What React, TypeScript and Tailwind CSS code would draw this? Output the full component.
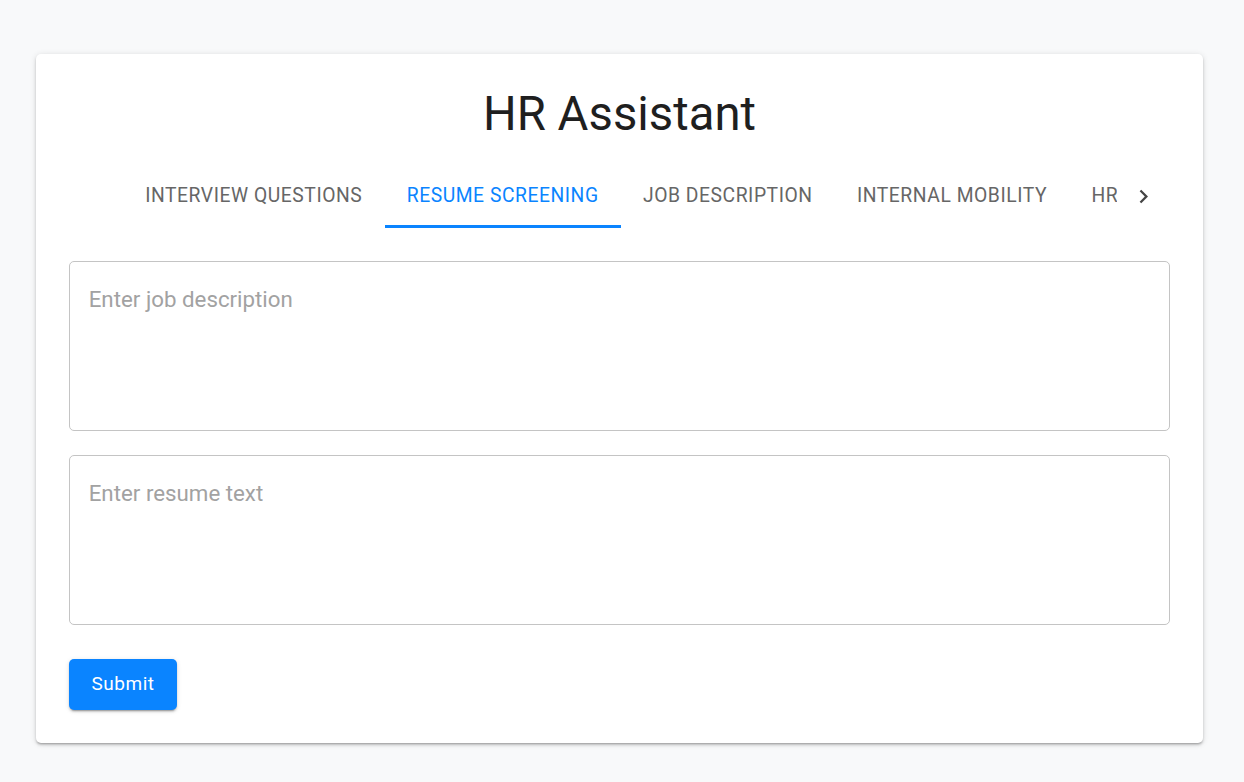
import React from "react";

const tabs = ["Interview Questions", "Resume Screening", "Job Description", "Internal Mobility", "HR Policies"];

export default function App() {
  return (
    <div className="min-h-[782px] w-full bg-[#f8f9fa] pt-[54px]" style={{ fontFamily: "Roboto, 'Noto Sans', sans-serif" }}>
      <div className="ml-[36px] w-[1167px] rounded-[5px] bg-white px-[33px] pt-[32px] pb-[33px] shadow-[0_2px_2px_-1px_rgba(0,0,0,0.2),0_2px_3px_0_rgba(0,0,0,0.14),0_1px_6px_0_rgba(0,0,0,0.12)]">
        <h1 className="text-center text-[47.3px] leading-[56px] font-normal text-[#1f1f1f]">HR Assistant</h1>
        <div className="mt-[22px] flex h-[64px]">
          <div className="w-[54px] shrink-0" />
          <div className="relative flex flex-1 overflow-hidden">
            <div className="flex shrink-0">
              {tabs.map((t, i) => (
                <div
                  key={t}
                  className={`relative flex h-[64px] shrink-0 items-center px-[22.2px] text-[19.3px] font-normal uppercase tracking-[0.02857em] ${i === 1 ? "text-[#0a84ff]" : "text-[#666666]"}`}
                >
                  {t}
                  {i === 1 && <div className="absolute bottom-0 left-0 right-0 h-[3px] bg-[#0a84ff]" />}
                </div>
              ))}
            </div>
          </div>
          <div className="flex w-[53px] shrink-0 items-center justify-center">
            <svg viewBox="0 0 24 24" width="27" height="27" fill="#444">
              <path d="M8.59 16.59 13.17 12 8.59 7.41 10 6l6 6-6 6z" />
            </svg>
          </div>
        </div>
        <div className="mt-[33px] flex flex-col gap-[24px]">
          <textarea
            rows={4}
            placeholder="Enter job description"
            className="block h-[170px] w-full resize-none rounded-[5px] border border-[#c4c4c4] px-[18.7px] py-[22px] text-[22.3px] leading-[30.6px] text-[#222] outline-none placeholder:text-[#a2a2a2]"
          />
          <textarea
            rows={4}
            placeholder="Enter resume text"
            className="block h-[170px] w-full resize-none rounded-[5px] border border-[#c4c4c4] px-[18.7px] py-[22px] text-[22.3px] leading-[30.6px] text-[#222] outline-none placeholder:text-[#a2a2a2]"
          />
        </div>
        <button className="mt-[34px] flex h-[51px] w-[108px] items-center justify-center rounded-[5px] bg-[#0a84ff] text-[19px] font-normal tracking-[0.02857em] text-white shadow-[0_3px_1px_-2px_rgba(0,0,0,0.2),0_2px_2px_0_rgba(0,0,0,0.14),0_1px_5px_0_rgba(0,0,0,0.12)]">
          Submit
        </button>
      </div>
    </div>
  );
}
